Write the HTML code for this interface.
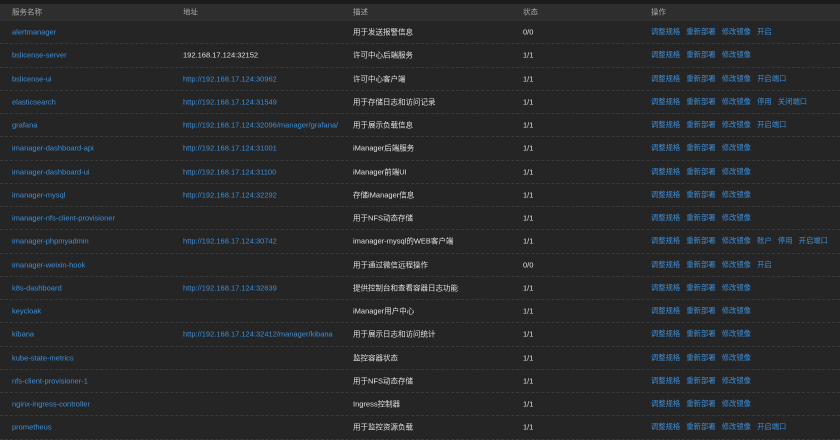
<!DOCTYPE html>
<html><head><meta charset="utf-8"><style>
html,body{margin:0;padding:0;width:840px;height:440px;overflow:hidden;background:#252526;}
body{font-family:"Liberation Sans","Noto Sans CJK SC",sans-serif;font-size:7.5px;color:#e0e0e0;}
.top{height:3.5px;background:#1c1c1c;}
.hd{height:17.5px;background:#2e2e2e;position:relative;color:#a8a8a8;}
.row{height:22.25px;border-bottom:1px dashed #3a3a3a;position:relative;}
.c{position:absolute;top:50%;transform:translateY(-50%);white-space:nowrap;}
.n{left:12px}.a{left:183px}.d{left:353px}.s{left:523px}.o{left:651px}
.l{color:#3d8fd8}
.o span{margin-right:6.2px;color:#3d8fd8;font-size:7.3px}
</style></head><body>
<div class="top"></div>
<div class="hd"><span class="c n">服务名称</span><span class="c a">地址</span><span class="c d">描述</span><span class="c s">状态</span><span class="c o" style="color:#a8a8a8">操作</span></div>
<div class="row"><span class="c n l">alertmanager</span><span class="c d">用于发送报警信息</span><span class="c s">0/0</span><span class="c o"><span>调整规格</span><span>重新部署</span><span>修改镜像</span><span>开启</span></span></div>
<div class="row"><span class="c n l">bslicense-server</span><span class="c a">192.168.17.124:32152</span><span class="c d">许可中心后端服务</span><span class="c s">1/1</span><span class="c o"><span>调整规格</span><span>重新部署</span><span>修改镜像</span></span></div>
<div class="row"><span class="c n l">bslicense-ui</span><span class="c a l">http://192.168.17.124:30962</span><span class="c d">许可中心客户端</span><span class="c s">1/1</span><span class="c o"><span>调整规格</span><span>重新部署</span><span>修改镜像</span><span>开启端口</span></span></div>
<div class="row"><span class="c n l">elasticsearch</span><span class="c a l">http://192.168.17.124:31549</span><span class="c d">用于存储日志和访问记录</span><span class="c s">1/1</span><span class="c o"><span>调整规格</span><span>重新部署</span><span>修改镜像</span><span>停用</span><span>关闭端口</span></span></div>
<div class="row"><span class="c n l">grafana</span><span class="c a l">http://192.168.17.124:32096/manager/grafana/</span><span class="c d">用于展示负载信息</span><span class="c s">1/1</span><span class="c o"><span>调整规格</span><span>重新部署</span><span>修改镜像</span><span>开启端口</span></span></div>
<div class="row"><span class="c n l">imanager-dashboard-api</span><span class="c a l">http://192.168.17.124:31001</span><span class="c d">iManager后端服务</span><span class="c s">1/1</span><span class="c o"><span>调整规格</span><span>重新部署</span><span>修改镜像</span></span></div>
<div class="row"><span class="c n l">imanager-dashboard-ui</span><span class="c a l">http://192.168.17.124:31100</span><span class="c d">iManager前端UI</span><span class="c s">1/1</span><span class="c o"><span>调整规格</span><span>重新部署</span><span>修改镜像</span></span></div>
<div class="row"><span class="c n l">imanager-mysql</span><span class="c a l">http://192.168.17.124:32292</span><span class="c d">存储iManager信息</span><span class="c s">1/1</span><span class="c o"><span>调整规格</span><span>重新部署</span><span>修改镜像</span></span></div>
<div class="row"><span class="c n l">imanager-nfs-client-provisioner</span><span class="c d">用于NFS动态存储</span><span class="c s">1/1</span><span class="c o"><span>调整规格</span><span>重新部署</span><span>修改镜像</span></span></div>
<div class="row"><span class="c n l">imanager-phpmyadmin</span><span class="c a l">http://192.168.17.124:30742</span><span class="c d">imanager-mysql的WEB客户端</span><span class="c s">1/1</span><span class="c o"><span>调整规格</span><span>重新部署</span><span>修改镜像</span><span>账户</span><span>停用</span><span>开启端口</span></span></div>
<div class="row"><span class="c n l">imanager-weixin-hook</span><span class="c d">用于通过微信远程操作</span><span class="c s">0/0</span><span class="c o"><span>调整规格</span><span>重新部署</span><span>修改镜像</span><span>开启</span></span></div>
<div class="row"><span class="c n l">k8s-dashboard</span><span class="c a l">http://192.168.17.124:32639</span><span class="c d">提供控制台和查看容器日志功能</span><span class="c s">1/1</span><span class="c o"><span>调整规格</span><span>重新部署</span><span>修改镜像</span></span></div>
<div class="row"><span class="c n l">keycloak</span><span class="c d">iManager用户中心</span><span class="c s">1/1</span><span class="c o"><span>调整规格</span><span>重新部署</span><span>修改镜像</span></span></div>
<div class="row"><span class="c n l">kibana</span><span class="c a l">http://192.168.17.124:32412/manager/kibana</span><span class="c d">用于展示日志和访问统计</span><span class="c s">1/1</span><span class="c o"><span>调整规格</span><span>重新部署</span><span>修改镜像</span></span></div>
<div class="row"><span class="c n l">kube-state-metrics</span><span class="c d">监控容器状态</span><span class="c s">1/1</span><span class="c o"><span>调整规格</span><span>重新部署</span><span>修改镜像</span></span></div>
<div class="row"><span class="c n l">nfs-client-provisioner-1</span><span class="c d">用于NFS动态存储</span><span class="c s">1/1</span><span class="c o"><span>调整规格</span><span>重新部署</span><span>修改镜像</span></span></div>
<div class="row"><span class="c n l">nginx-ingress-controller</span><span class="c d">Ingress控制器</span><span class="c s">1/1</span><span class="c o"><span>调整规格</span><span>重新部署</span><span>修改镜像</span></span></div>
<div class="row"><span class="c n l">prometheus</span><span class="c d">用于监控资源负载</span><span class="c s">1/1</span><span class="c o"><span>调整规格</span><span>重新部署</span><span>修改镜像</span><span>开启端口</span></span></div>
</body></html>
